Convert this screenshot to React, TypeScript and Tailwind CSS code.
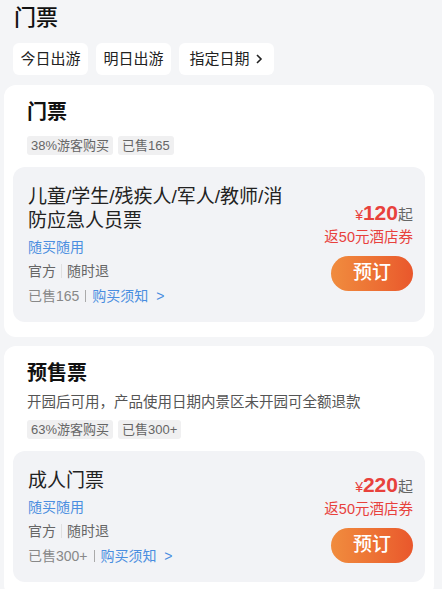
const font = { fontFamily: '"Liberation Sans", "Noto Sans CJK SC", sans-serif' };

type Ticket = {
  name: string;
  price: number;
  sold: string;
};

type Section = {
  title: string;
  desc?: string;
  percent: string;
  sold: string;
  ticket: Ticket;
};

const SECTIONS: Section[] = [
  {
    title: '门票',
    percent: '38%游客购买',
    sold: '已售165',
    ticket: { name: '儿童/学生/残疾人/军人/教师/消防应急人员票', price: 120, sold: '已售165' },
  },
  {
    title: '预售票',
    desc: '开园后可用，产品使用日期内景区未开园可全额退款',
    percent: '63%游客购买',
    sold: '已售300+',
    ticket: { name: '成人门票', price: 220, sold: '已售300+' },
  },
];

function TicketRow({ t }: { t: Ticket }) {
  return (
    <div className="mt-3 flex items-center rounded-xl bg-[#f2f3f6] pb-4 pl-[15px] pr-3 pt-[18px]">
      <div className="min-w-0 flex-1 pr-4">
        <p className="max-w-[262px] text-[19px] leading-6 text-[#222]">{t.name}</p>
        <p className="mt-1 text-[14px] leading-5 text-[#4a8ee0]">随买随用</p>
        <p className="mt-1 flex items-center text-[14px] leading-5 text-[#666]">
          官方<span className="mx-[5px] h-3.5 w-px bg-[#e0e0e0]" />随时退
        </p>
        <p className="mt-[5px] flex items-center text-[14px] leading-5 text-[#888]">
          {t.sold}
          <span className="mx-[6px] h-3 w-px bg-[#aaa]" />
          <span className="text-[#4a8ee0]">购买须知 &nbsp;&gt;</span>
        </p>
      </div>
      <div className="flex flex-none flex-col items-end">
        <p className="flex items-baseline leading-6">
          <span className="text-[14px] text-[#e8413c]">¥</span>
          <span className="text-[21px] font-bold text-[#e8413c]">{t.price}</span>
          <span className="text-[15px] text-[#666]">起</span>
        </p>
        <p className="text-[14.5px] leading-5 text-[#e8413c]">返50元酒店券</p>
        <button
          type="button"
          className="mt-[9px] h-[35px] w-[82px] rounded-full bg-gradient-to-r from-[#f08c3e] to-[#e9572c] text-[19px] font-medium text-white"
        >
          预订
        </button>
      </div>
    </div>
  );
}

function SectionCard({ s }: { s: Section }) {
  return (
    <div className="ml-1 mr-2 rounded-xl bg-white px-[9px] pb-[15px] pt-[13px]">
      <h2 className="pl-[14px] text-[20px] font-bold leading-7 text-[#111]">{s.title}</h2>
      {s.desc ? <p className="mt-[5px] pl-[14px] text-[14.5px] leading-5 text-[#555]">{s.desc}</p> : null}
      <div className={`${s.desc ? 'mt-2' : 'mt-[10px]'} flex gap-[5px] pl-[14px]`}>
        <span className="rounded-[3px] bg-[#f0f0f1] px-1 text-[13px] leading-[19px] text-[#666]">{s.percent}</span>
        <span className="rounded-[3px] bg-[#f0f0f1] px-1 text-[13px] leading-[19px] text-[#666]">{s.sold}</span>
      </div>
      <TicketRow t={s.ticket} />
    </div>
  );
}

export default function App() {
  return (
    <main style={font} className="min-h-[589px] w-[442px] overflow-hidden bg-[#f4f5f7] pt-1">
      <h1 className="pl-[14px] text-[22px] font-medium leading-7 text-[#111]">门票</h1>
      <div className="mt-[11px] flex gap-2 pl-[13px]">
        {['今日出游', '明日出游'].map((d) => (
          <span key={d} className="flex h-8 w-[75px] items-center justify-center rounded-md bg-white text-[15px] text-[#222]">{d}</span>
        ))}
        <span className="flex h-8 w-[95px] items-center justify-center rounded-md bg-white text-[15px] text-[#222]">
          指定日期
          <svg width="10" height="12" viewBox="0 0 10 12" className="ml-1">
            <path d="M3 2l4 4-4 4" fill="none" stroke="#222" strokeWidth="1.6" />
          </svg>
        </span>
      </div>
      <div className="mt-[10px] flex flex-col gap-[9px]">
        {SECTIONS.map((s) => <SectionCard key={s.title} s={s} />)}
      </div>
    </main>
  );
}
